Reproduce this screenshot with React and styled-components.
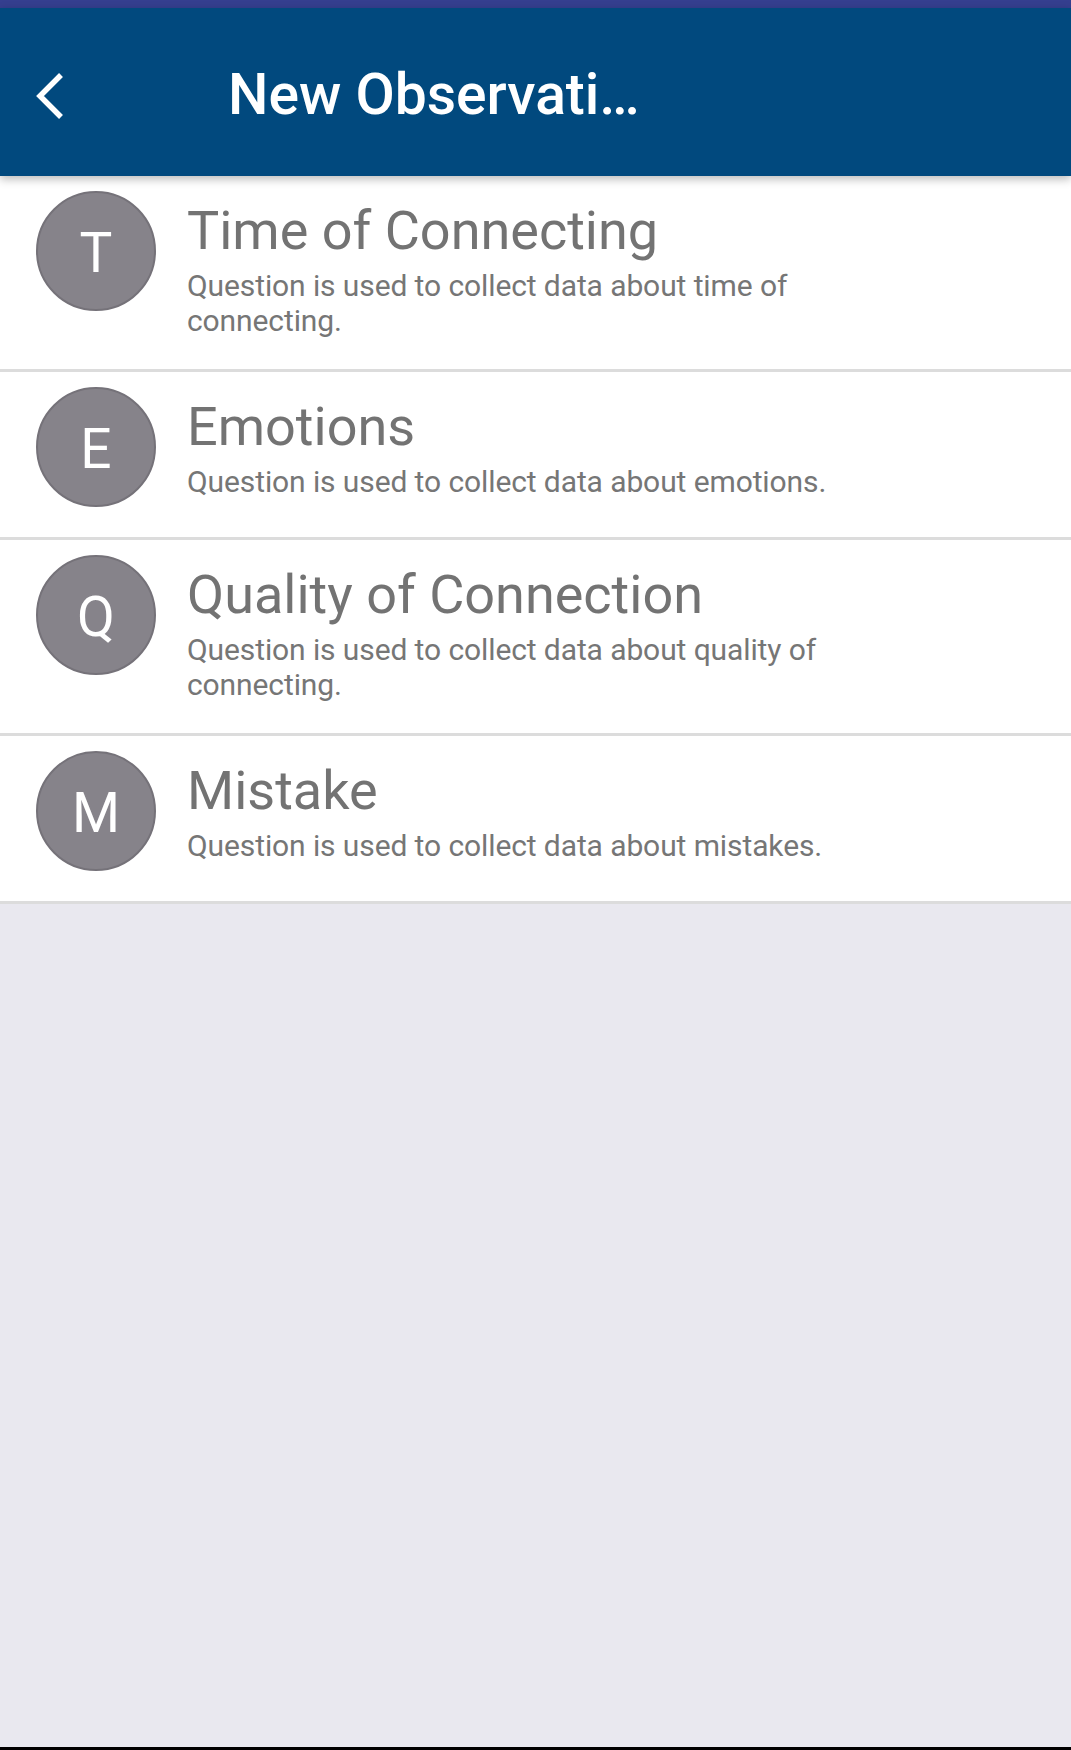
import styled, { createGlobalStyle } from 'styled-components';

const GlobalStyle = createGlobalStyle`
  html, body {
    margin: 0;
    padding: 0;
    background: #e9e8ef;
  }
  * {
    box-sizing: border-box;
  }
`;

const Page = styled.div`
  display: flex;
  flex-direction: column;
  min-height: 100vh;
  font-family: Roboto, 'Noto Sans', sans-serif;
  background: #e9e8ef;
`;

const StatusStrip = styled.div`
  height: 8px;
  background: #353f8f;
`;

const Toolbar = styled.header`
  position: relative;
  z-index: 2;
  display: flex;
  align-items: center;
  height: 168px;
  padding-left: 35px;
  background: #01497e;
  box-shadow: 0 3px 9px rgba(0, 0, 0, 0.28);
`;

const BackButton = styled.button`
  display: flex;
  align-items: center;
  justify-content: center;
  width: 30px;
  height: 48px;
  padding: 0;
  margin-top: 8px;
  border: none;
  background: none;
  cursor: pointer;
`;

const Title = styled.h1`
  margin: 4px 0 0 163px;
  font-size: 57px;
  font-weight: 500;
  color: #ffffff;
  white-space: nowrap;
`;

const List = styled.ul`
  list-style: none;
  margin: 0;
  padding: 0;
  background: #ffffff;
`;

const Item = styled.li`
  display: flex;
  align-items: flex-start;
  padding: 15px 0 30px 36px;
  border-bottom: 3px solid #dcdcdc;
  background: #ffffff;
`;

const Avatar = styled.div`
  flex: none;
  display: flex;
  align-items: center;
  justify-content: center;
  width: 120px;
  height: 120px;
  border-radius: 50%;
  background: #86838a;
  border: 2px solid #757279;
  color: #ffffff;
  font-size: 55px;
  font-weight: 400;
  padding-top: 4px;
`;

const Texts = styled.div`
  display: flex;
  flex-direction: column;
  gap: 5px;
  margin: 8px 0 1px 31px;
  max-width: 700px;
`;

const ItemTitle = styled.div`
  font-size: 54px;
  line-height: 64px;
  color: #737373;
`;

const ItemText = styled.div`
  font-size: 30px;
  line-height: 35px;
  letter-spacing: -0.1px;
  color: #767676;
`;

const Filler = styled.div`
  flex: 1;
`;

const BottomEdge = styled.div`
  height: 3px;
  background: #000000;
`;

const questions = [
  {
    letter: 'T',
    title: 'Time of Connecting',
    text: 'Question is used to collect data about time of connecting.',
  },
  {
    letter: 'E',
    title: 'Emotions',
    text: 'Question is used to collect data about emotions.',
  },
  {
    letter: 'Q',
    title: 'Quality of Connection',
    text: 'Question is used to collect data about quality of connecting.',
  },
  {
    letter: 'M',
    title: 'Mistake',
    text: 'Question is used to collect data about mistakes.',
  },
];

const App = () => {
  return (
    <Page>
      <GlobalStyle />
      <StatusStrip />
      <Toolbar>
        <BackButton aria-label="Back">
          <svg width="30" height="48" viewBox="0 0 30 48">
            <path d="M26 3 L5 24 L26 45" fill="none" stroke="#ffffff" strokeWidth="5.5" />
          </svg>
        </BackButton>
        <Title>New Observati…</Title>
      </Toolbar>
      <List>
        {questions.map((q) => (
          <Item key={q.letter}>
            <Avatar>{q.letter}</Avatar>
            <Texts>
              <ItemTitle>{q.title}</ItemTitle>
              <ItemText>{q.text}</ItemText>
            </Texts>
          </Item>
        ))}
      </List>
      <Filler />
      <BottomEdge />
    </Page>
  );
};

export default App;
